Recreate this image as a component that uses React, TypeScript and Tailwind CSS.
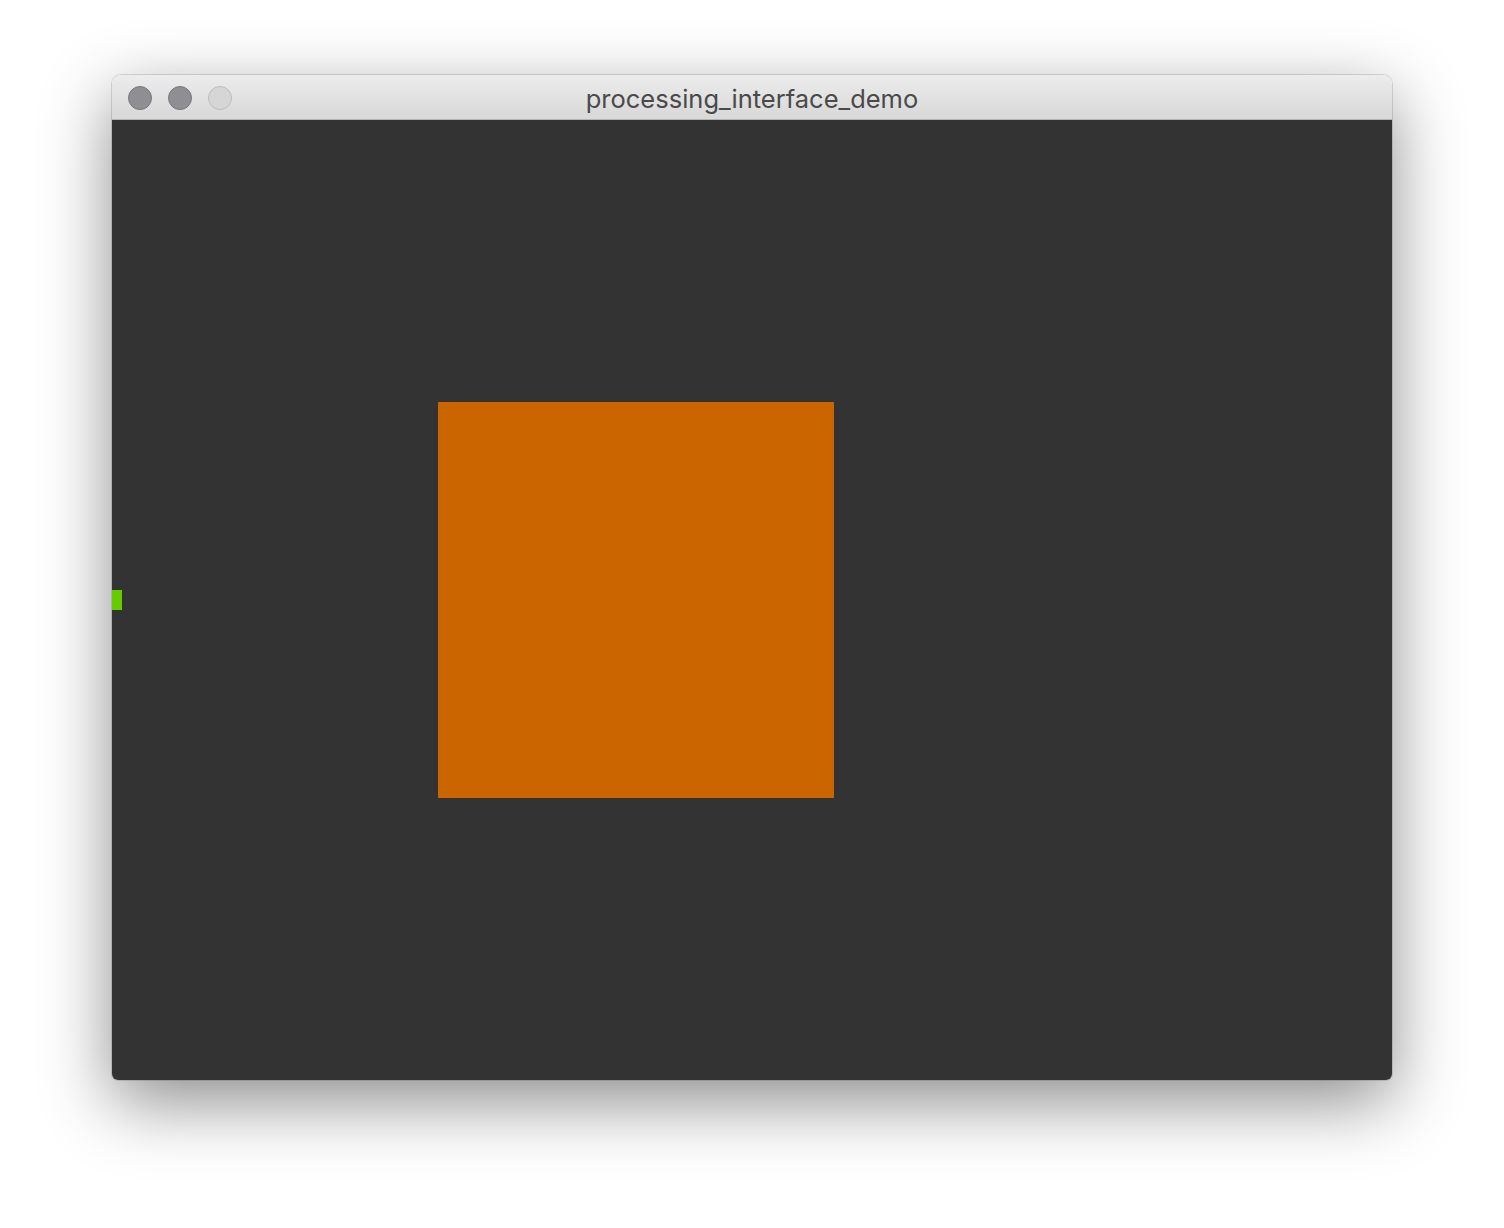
import React from "react";

export default function App() {
  return (
    <div className="w-[1504px] h-[1228px] bg-white pt-[75px] pl-[112px]" style={{ fontFamily: "Inter, 'Open Sans', sans-serif" }}>
      <div className="w-[1280px] flex flex-col rounded-t-[9px] rounded-b-[6px] overflow-hidden shadow-[0_22px_70px_rgba(0,0,0,0.45),0_0_0_1px_rgba(0,0,0,0.12)]">
        <div className="relative h-[45px] flex items-center justify-center bg-gradient-to-b from-[#ececec] to-[#d8d8d8] border-b border-[#b4b4b4]">
          <div className="absolute left-[16px] top-[11px] flex gap-[16px]">
            <span className="w-[24px] h-[24px] rounded-full bg-[#8f8e93] border border-[#77767b]" />
            <span className="w-[24px] h-[24px] rounded-full bg-[#8f8e93] border border-[#77767b]" />
            <span className="w-[24px] h-[24px] rounded-full bg-[#d6d6d6] border border-[#bdbdbd]" />
          </div>
          <span className="text-[25.5px] text-[#4a4a4a] leading-none mt-[3px]">processing_interface_demo</span>
        </div>
        <div className="relative h-[960px] bg-[#333333]">
          <div className="absolute left-[326px] top-[282px] w-[396px] h-[396px] bg-[#ca6500]" />
          <div className="absolute left-0 top-[470px] w-[10px] h-[20px] bg-[#66cc00]" />
        </div>
      </div>
    </div>
  );
}
